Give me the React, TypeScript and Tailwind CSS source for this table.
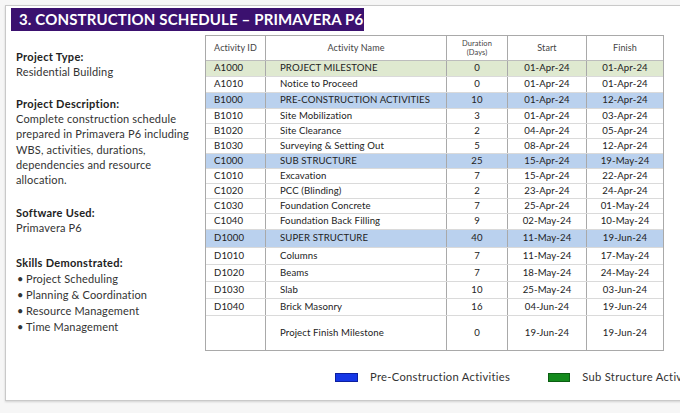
const rows = [
  { id: 'A1000', name: 'PROJECT MILESTONE', dur: '0', start: '01-Apr-24', finish: '01-Apr-24', kind: 'green', h: 'h-[16px]' },
  { id: 'A1010', name: 'Notice to Proceed', dur: '0', start: '01-Apr-24', finish: '01-Apr-24', kind: '', h: 'h-[16px]' },
  { id: 'B1000', name: 'PRE-CONSTRUCTION ACTIVITIES', dur: '10', start: '01-Apr-24', finish: '12-Apr-24', kind: 'blue', h: 'h-[16px]' },
  { id: 'B1010', name: 'Site Mobilization', dur: '3', start: '01-Apr-24', finish: '03-Apr-24', kind: '', h: 'h-[15px]' },
  { id: 'B1020', name: 'Site Clearance', dur: '2', start: '04-Apr-24', finish: '05-Apr-24', kind: '', h: 'h-[15px]' },
  { id: 'B1030', name: 'Surveying & Setting Out', dur: '5', start: '08-Apr-24', finish: '12-Apr-24', kind: '', h: 'h-[15px]' },
  { id: 'C1000', name: 'SUB STRUCTURE', dur: '25', start: '15-Apr-24', finish: '19-May-24', kind: 'blue', h: 'h-[15px]' },
  { id: 'C1010', name: 'Excavation', dur: '7', start: '15-Apr-24', finish: '22-Apr-24', kind: '', h: 'h-[15px]' },
  { id: 'C1020', name: 'PCC (Blinding)', dur: '2', start: '23-Apr-24', finish: '24-Apr-24', kind: '', h: 'h-[15px]' },
  { id: 'C1030', name: 'Foundation Concrete', dur: '7', start: '25-Apr-24', finish: '01-May-24', kind: '', h: 'h-[15px]' },
  { id: 'C1040', name: 'Foundation Back Filling', dur: '9', start: '02-May-24', finish: '10-May-24', kind: '', h: 'h-[16px]' },
  { id: 'D1000', name: 'SUPER STRUCTURE', dur: '40', start: '11-May-24', finish: '19-Jun-24', kind: 'blue', h: 'h-[18px]' },
  { id: 'D1010', name: 'Columns', dur: '7', start: '11-May-24', finish: '17-May-24', kind: '', h: 'h-[17px]' },
  { id: 'D1020', name: 'Beams', dur: '7', start: '18-May-24', finish: '24-May-24', kind: '', h: 'h-[17px]' },
  { id: 'D1030', name: 'Slab', dur: '10', start: '25-May-24', finish: '03-Jun-24', kind: '', h: 'h-[17px]' },
  { id: 'D1040', name: 'Brick Masonry', dur: '16', start: '04-Jun-24', finish: '19-Jun-24', kind: '', h: 'h-[17px]' },
  { id: '', name: 'Project Finish Milestone', dur: '0', start: '19-Jun-24', finish: '19-Jun-24', kind: '', h: 'h-[34px]' },
];

const cols = 'grid grid-cols-[60px_181px_61px_79px_76px]';

const rowBg = (kind: string) => {
  if (kind === 'green') return 'bg-[#dfe9d0]';
  if (kind === 'blue') return 'bg-[#bad1ee]';
  return 'bg-white';
};

const App = () => {
  return (
    <div className="w-[680px] h-[413px] overflow-hidden bg-[#f6f6f6] pt-[5px] pl-[5px] font-['Lato',sans-serif] text-[#222]">
      <div className="w-[720px] h-[396px] bg-white border border-[#c9c9c9] shadow-[0_1px_2px_rgba(0,0,0,0.15)]">
        {/* Title */}
        <div className="ml-[5px] mt-[2px] w-[353px] h-[23px] bg-[#3b116f] flex items-center pl-[8px]">
          <h1 className="text-white font-bold text-[15px] tracking-[0.15px] leading-none">
            3. CONSTRUCTION SCHEDULE – PRIMAVERA P6
          </h1>
        </div>

        <div className="flex mt-[4px]">
          {/* Left info */}
          <div className="w-[199px] shrink-0 pl-[10px] pt-[14px] text-[11px] tracking-[0.15px] text-[#333] whitespace-nowrap">
            <p className="font-bold leading-[15px] text-[#222] tracking-[0.3px]">Project Type:</p>
            <p className="leading-[15px]">Residential Building</p>

            <p className="font-bold leading-[15px] text-[#222] tracking-[0.3px] mt-[17px]">Project Description:</p>
            <p className="leading-[15.25px]">
              Complete construction schedule
              <br />
              prepared in Primavera P6 including
              <br />
              WBS, activities, durations,
              <br />
              dependencies and resource
              <br />
              allocation.
            </p>

            <p className="font-bold leading-[15px] text-[#222] tracking-[0.3px] mt-[18px]">Software Used:</p>
            <p className="leading-[16px]">Primavera P6</p>

            <p className="font-bold leading-[16px] text-[#222] tracking-[0.3px] mt-[19px]">Skills Demonstrated:</p>
            <ul className="leading-[16px]">
              {['Project Scheduling', 'Planning & Coordination', 'Resource Management', 'Time Management'].map((s) => (
                <li key={s} className="flex">
                  <span className="w-[10px] pl-[1px]">•</span>
                  <span>{s}</span>
                </li>
              ))}
            </ul>
          </div>

          {/* Schedule table + legend */}
          <div className="shrink-0">
            <div className="w-[459px] border border-[#a9a9a9] text-[9.6px] tracking-[0.1px]">
              <div className={`${cols} h-[25px] text-[9px] text-[#444] border-b border-[#bdbdbd]`}>
                <div className="flex items-center justify-center border-r border-[#a9a9a9]">Activity ID</div>
                <div className="flex items-center justify-center border-r border-[#a9a9a9]">Activity Name</div>
                <div className="flex flex-col items-center justify-center border-r border-[#a9a9a9] text-[7.5px] leading-[9px]">
                  <span>Duration</span>
                  <span>(Days)</span>
                </div>
                <div className="flex items-center justify-center border-r border-[#a9a9a9]">Start</div>
                <div className="flex items-center justify-center">Finish</div>
              </div>
              {rows.map((r, i) => (
                <div
                  key={r.name}
                  className={`${cols} ${r.h} ${rowBg(r.kind)} ${i < rows.length - 1 ? 'border-b border-[#dadada]' : ''}`}
                >
                  <div className="flex items-center pl-[8px] border-r border-[#a9a9a9]">{r.id}</div>
                  <div className="flex items-center pl-[14px] border-r border-[#a9a9a9]">{r.name}</div>
                  <div className="flex items-center justify-center border-r border-[#a9a9a9]">{r.dur}</div>
                  <div className="flex items-center justify-center border-r border-[#a9a9a9]">{r.start}</div>
                  <div className="flex items-center justify-center">{r.finish}</div>
                </div>
              ))}
            </div>

            {/* Legend */}
            <div className="flex items-center mt-[18px] ml-[130px] text-[11.2px] tracking-[0.3px] text-[#333] whitespace-nowrap">
              <span className="w-[23px] h-[9px] bg-[#1537e6] border border-[#0c1fa0]" />
              <span className="ml-[12px]">Pre-Construction Activities</span>
              <span className="ml-[38px] w-[22px] h-[9px] bg-[#138a1c] border border-[#0b5e12]" />
              <span className="ml-[12px]">Sub Structure Activities</span>
            </div>
          </div>

          <div className="shrink-0 ml-[15px] -mt-[5px] h-[320px] border-l border-[#c4c4c4]" />
        </div>
      </div>
    </div>
  );
};

export default App;
